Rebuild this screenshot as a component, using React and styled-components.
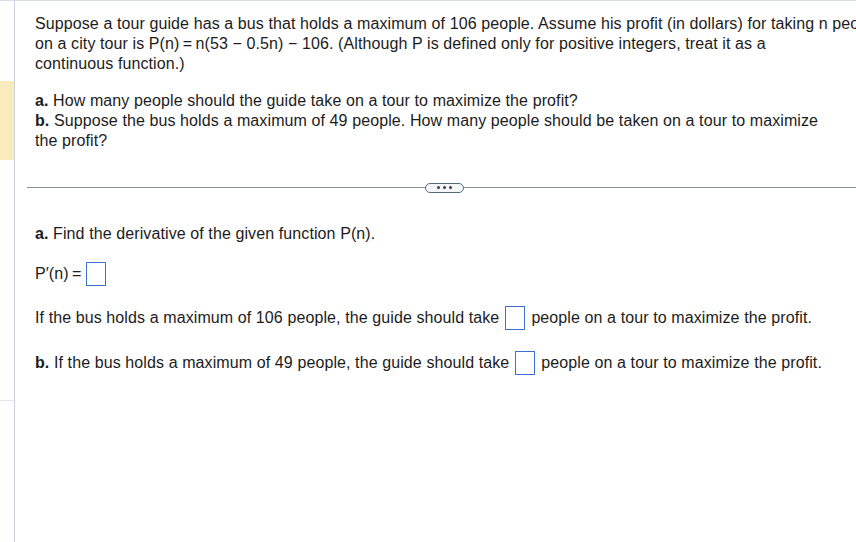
import React from "react";
import styled, { createGlobalStyle } from "styled-components";

const Global = createGlobalStyle`
  html, body { margin: 0; padding: 0; background: #fff; overflow: hidden; }
  body { font-family: "Liberation Sans", Arial, sans-serif; color: #1c1c1c; }
`;

const Page = styled.div`
  display: flex;
  width: 856px;
  height: 542px;
  border-top: 1px solid #d6dce6;
  box-sizing: border-box;
  overflow: hidden;
`;

const Sidebar = styled.div`
  width: 14px;
  flex: none;
  border-right: 1px solid #c9d3e0;
  display: flex;
  flex-direction: column;
`;

const SideSpacer = styled.div`
  height: ${(p) => p.$h}px;
  flex: none;
`;

const SideMark = styled.div`
  height: 79px;
  flex: none;
  background: #f8ebbe;
`;

const SideRule = styled.div`
  height: 1px;
  background: #e2e4e8;
  flex: none;
`;

const Main = styled.div`
  flex: 1;
  padding: 13px 0 0 20px;
  font-size: 16px;
  letter-spacing: 0.1px;
  line-height: 20px;
  white-space: nowrap;
  min-width: 0;
`;

const Para = styled.p`
  margin: 0 0 ${(p) => p.$mb || 0}px 0;
`;

const B = styled.b`
  font-weight: bold;
`;

const Separator = styled.div`
  display: flex;
  align-items: center;
  height: 11px;
  margin: 31px 0 31px -8px;
`;

const Line = styled.div`
  height: 1px;
  background: #8c9198;
  flex: ${(p) => (p.$grow ? 1 : "none")};
  width: ${(p) => (p.$grow ? "auto" : "398px")};
`;

const Pill = styled.div`
  width: 37px;
  height: 8px;
  border: 1.5px solid #5a6a7b;
  border-radius: 6px;
  background: #f3f5f7;
  display: flex;
  align-items: center;
  justify-content: center;
  gap: 3px;
  flex: none;
`;

const Dot = styled.span`
  width: 3px;
  height: 3px;
  border-radius: 50%;
  background: #3a3f46;
`;

const Row = styled.div`
  display: flex;
  align-items: center;
  height: 24px;
  margin-bottom: ${(p) => p.$mb || 0}px;
`;

const AnswerBox = styled.span`
  display: inline-block;
  width: 18px;
  height: 22px;
  border: 1px solid #3d6fcf;
  margin: 0 ${(p) => p.$r ?? 6}px 0 ${(p) => p.$l ?? 6}px;
  flex: none;
`;

export default function App() {
  return (
    <Page>
      <Global />
      <Sidebar>
        <SideSpacer $h={80} />
        <SideMark />
        <SideSpacer $h={240} />
        <SideRule />
      </Sidebar>
      <Main>
        <Para $mb={17}>
          Suppose a tour guide has a bus that holds a maximum of 106 people. Assume his profit (in dollars) for taking n people
          <br />
          on a city tour is P(n)&#8201;=&#8201;n(53 − 0.5n) − 106. (Although P is defined only for positive integers, treat it as a
          <br />
          continuous function.)
        </Para>
        <Para>
          <B>a.</B> How many people should the guide take on a tour to maximize the profit?
          <br />
          <B>b.</B> Suppose the bus holds a maximum of 49 people. How many people should be taken on a tour to maximize
          <br />
          the profit?
        </Para>
        <Separator>
          <Line />
          <Pill>
            <Dot />
            <Dot />
            <Dot />
          </Pill>
          <Line $grow />
        </Separator>
        <Para $mb={18}>
          <B>a.</B> Find the derivative of the given function P(n).
        </Para>
        <Row $mb={20}>
          P′(n)&#8201;=
          <AnswerBox $l={5} />
        </Row>
        <Row $mb={21}>
          If the bus holds a maximum of 106 people, the guide should take
          <AnswerBox />
          people on a tour to maximize the profit.
        </Row>
        <Row>
          <B>b.</B>&nbsp;If the bus holds a maximum of 49 people, the guide should take
          <AnswerBox />
          people on a tour to maximize the profit.
        </Row>
      </Main>
    </Page>
  );
}
